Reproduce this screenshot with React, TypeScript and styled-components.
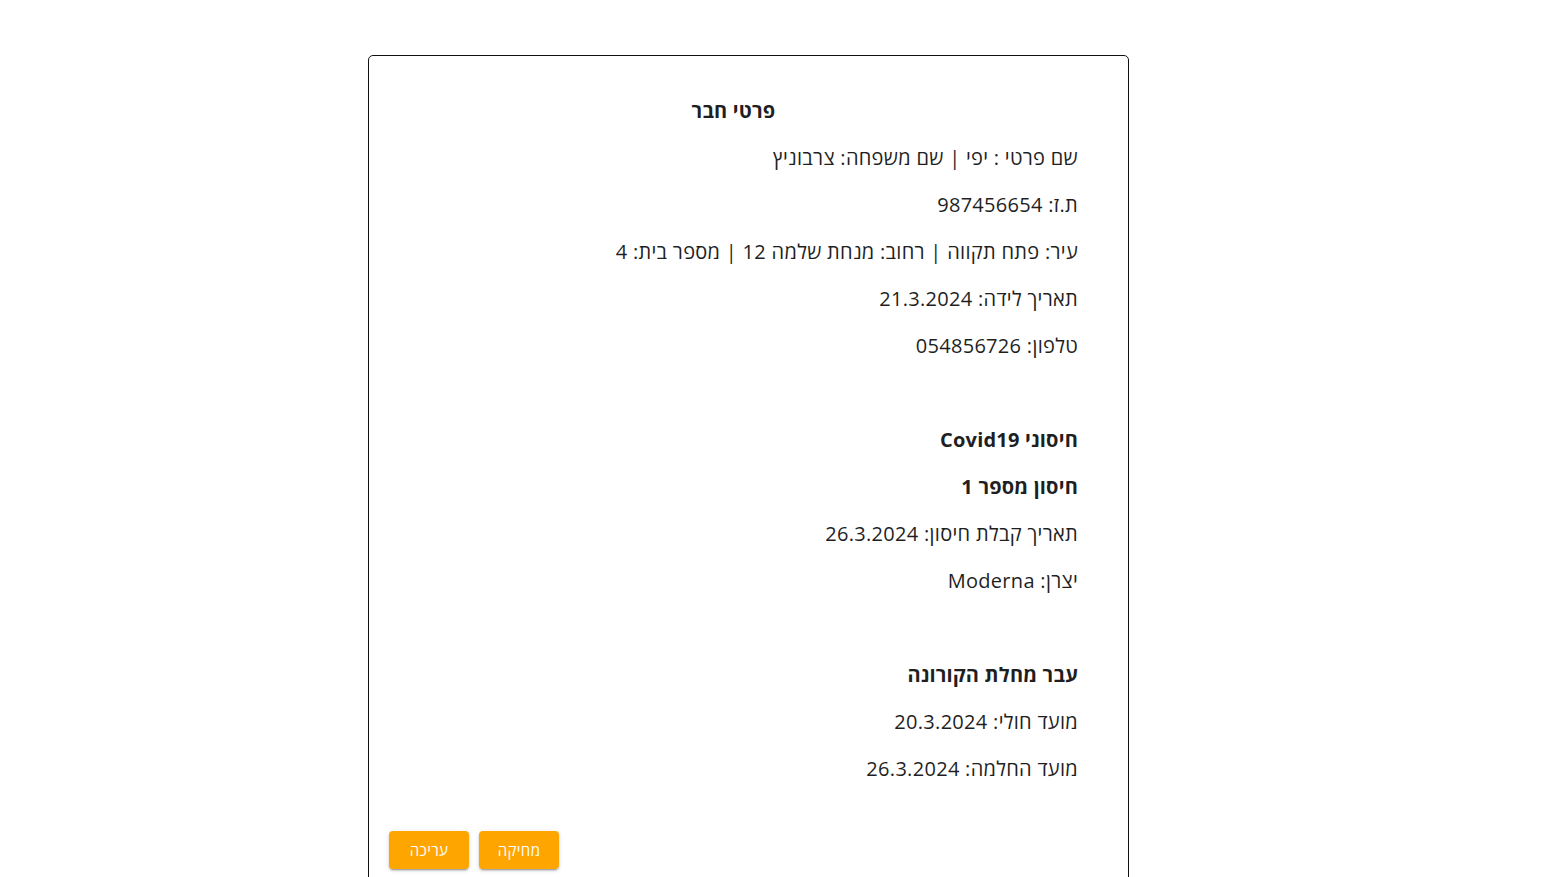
import React from "react";
import styled, { createGlobalStyle } from "styled-components";

const GlobalStyle = createGlobalStyle`
  html, body {
    margin: 0;
    padding: 0;
    background: #ffffff;
  }
  body {
    font-family: "Open Sans", "Liberation Sans", "DejaVu Sans", sans-serif;
    color: #212121;
  }
`;

const Page = styled.div`
  padding: 55px 0 0 368px;
`;

const Card = styled.div`
  box-sizing: border-box;
  width: 761px;
  border: 1px solid #111;
  border-radius: 5px;
  padding: 41px 50px 20px 20px;
  display: flex;
  flex-direction: column;
  direction: rtl;
`;

const Content = styled.div`
  display: flex;
  flex-direction: column;
  gap: 67px;
`;

const Section = styled.div`
  display: flex;
  flex-direction: column;
  gap: 20px;
`;

const Line = styled.div<{ $bold?: boolean; $center?: boolean }>`
  font-size: 20px;
  line-height: 27px;
  font-weight: ${(p) => (p.$bold ? 700 : 400)};
  text-align: ${(p) => (p.$center ? "center" : "right")};
  letter-spacing: ${(p) => (p.$bold ? "0.2px" : "0.3px")};
  color: #1f1f1f;
`;

const Actions = styled.div`
  display: flex;
  justify-content: flex-end;
  gap: 10px;
  margin-top: 49px;
`;

const ActionButton = styled.button`
  font-family: "Open Sans", "Liberation Sans", "DejaVu Sans", sans-serif;
  font-size: 15px;
  font-weight: 500;
  letter-spacing: 0.4px;
  line-height: 26px;
  min-width: 80px;
  padding: 6px 16px;
  border: none;
  border-radius: 4px;
  background: #ffa500;
  color: #ffffff;
  box-shadow: 0px 3px 1px -2px rgba(0, 0, 0, 0.2), 0px 2px 2px 0px rgba(0, 0, 0, 0.14),
    0px 1px 5px 0px rgba(0, 0, 0, 0.12);
  cursor: pointer;
  direction: rtl;
`;

export default function App() {
  return (
    <>
      <GlobalStyle />
      <Page>
        <Card>
          <Content>
            <Section>
              <Line $bold $center>
                פרטי חבר
              </Line>
              <Line>שם פרטי : יפי | שם משפחה: צרבוניץ</Line>
              <Line>ת.ז: 987456654</Line>
              <Line>עיר: פתח תקווה | רחוב: מנחת שלמה 12 | מספר בית: 4</Line>
              <Line>תאריך לידה: 21.3.2024</Line>
              <Line>טלפון: 054856726</Line>
            </Section>
            <Section>
              <Line $bold>חיסוני Covid19</Line>
              <Line $bold>חיסון מספר 1</Line>
              <Line>תאריך קבלת חיסון: 26.3.2024</Line>
              <Line>יצרן: Moderna</Line>
            </Section>
            <Section>
              <Line $bold>עבר מחלת הקורונה</Line>
              <Line>מועד חולי: 20.3.2024</Line>
              <Line>מועד החלמה: 26.3.2024</Line>
            </Section>
          </Content>
          <Actions>
            <ActionButton>מחיקה</ActionButton>
            <ActionButton>עריכה</ActionButton>
          </Actions>
        </Card>
      </Page>
    </>
  );
}
